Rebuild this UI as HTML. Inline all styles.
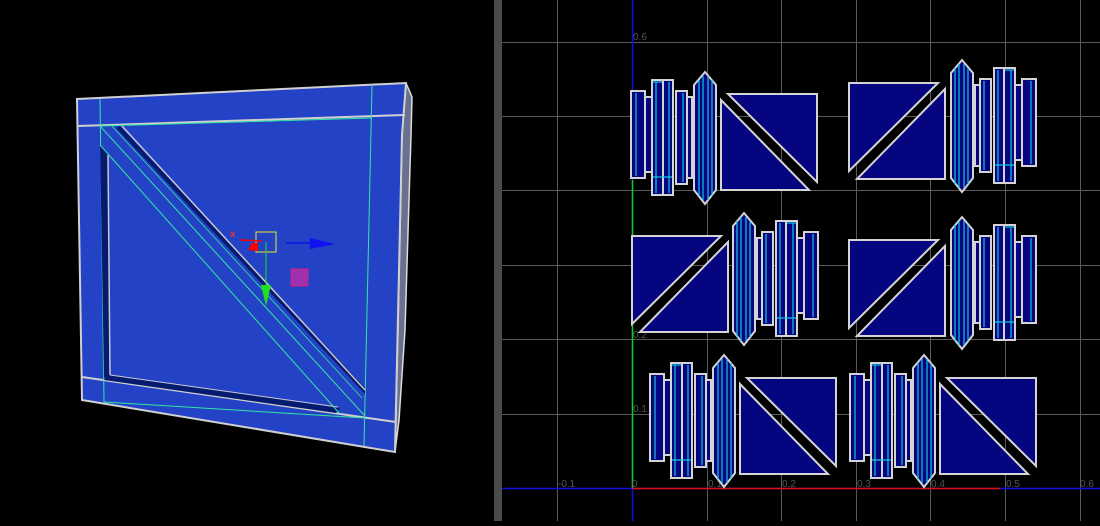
<!DOCTYPE html><html><head><style>html,body{margin:0;padding:0;background:#000;overflow:hidden}</style></head><body>
<svg width="1100" height="521" viewBox="0 0 1100 521" xmlns="http://www.w3.org/2000/svg" font-family="Liberation Sans, sans-serif">
<rect width="1100" height="521" fill="#000"/>
<defs>
<g id="strip" fill="#050580" stroke="#d4d4d4" stroke-width="2">
<rect x="0" y="19" width="14" height="87"/>
<rect x="14" y="25" width="7" height="75"/>
<rect x="21" y="8" width="11" height="115"/>
<rect x="32" y="8" width="10" height="115"/>
<rect x="45" y="19" width="11" height="93"/>
<rect x="56" y="25" width="5" height="81"/>
<polygon points="63,13 74,0 85,13 85,118 74,132 63,118"/>
<g stroke="#10c8e0" stroke-width="1.2">
<line x1="5" y1="21" x2="5" y2="104"/><line x1="25" y1="10" x2="25" y2="121"/><line x1="38" y1="10" x2="38" y2="121"/><line x1="52" y1="21" x2="52" y2="110"/>
<line x1="22" y1="10" x2="31" y2="10"/><line x1="22" y1="105" x2="41" y2="105"/>
<line x1="68" y1="8" x2="68" y2="124"/><line x1="72" y1="4" x2="72" y2="128"/><line x1="77" y1="4" x2="77" y2="128"/><line x1="81" y1="8" x2="81" y2="124"/>
</g>
</g>
<g id="sqA" fill="#050580" stroke="#d4d4d4" stroke-width="2">
<polygon points="0,6 0,96 88,96"/>
<polygon points="7,0 96,0 96,88"/>
</g>
</defs>
<!-- left viewport -->
<polygon points="406,83 412,97 411,135 405,330 399,420 395,452 398,330 402,135" fill="#6a7090" stroke="#ddd" stroke-width="1.5"/>
<polygon points="77,99 406,83 402,135 395,452 82,400" fill="#2442c6" stroke="#d0d0d0" stroke-width="2"/>
<polyline points="78,126 405,115" stroke="#d0d0d0" stroke-width="2" fill="none"/>
<polyline points="82,377 396,422" stroke="#d0d0d0" stroke-width="2" fill="none"/>
<line x1="100" y1="99" x2="104" y2="402" stroke="#30e8a0" stroke-width="1"/>
<line x1="372" y1="85" x2="364" y2="446" stroke="#30e8a0" stroke-width="1"/>
<line x1="100" y1="126" x2="372" y2="118" stroke="#30e8a0" stroke-width="1"/>
<polygon points="100,145 108,155 110,375 104,378" fill="#061a70"/>
<polygon points="108,375 340,408 336,413 104,380" fill="#061a70"/>
<line x1="108" y1="155" x2="110" y2="375" stroke="#c8c8d0" stroke-width="1.5"/>
<line x1="110" y1="375" x2="338" y2="407" stroke="#c8c8d0" stroke-width="1"/>
<polygon points="120,126 365,388 365,394 116,128" fill="#061a70"/>
<line x1="122" y1="126" x2="365" y2="390" stroke="#c8c8d0" stroke-width="1.5"/>
<line x1="100" y1="126" x2="365" y2="416" stroke="#30e8a0" stroke-width="1"/>
<line x1="100" y1="145" x2="340" y2="414" stroke="#30e8a0" stroke-width="1"/>
<line x1="112" y1="126" x2="362" y2="398" stroke="#30e8a0" stroke-width="0.8"/>
<line x1="104" y1="402" x2="365" y2="418" stroke="#30e8a0" stroke-width="1"/>
<!-- gizmo -->
<rect x="256" y="232" width="20" height="20" fill="none" stroke="#e8e820" stroke-width="1"/>
<line x1="240" y1="240" x2="262" y2="241" stroke="#f00" stroke-width="1.5"/>
<text x="230" y="237" fill="#f03030" font-size="10" font-weight="bold">x</text>
<path d="M248 250 L252 243 L258 243 L258 251 Z" fill="#f00"/>
<line x1="266" y1="242" x2="266" y2="290" stroke="#20e020" stroke-width="1"/>
<polygon points="261,285 271,285 266,306" fill="#20e020"/>
<line x1="286" y1="243" x2="314" y2="243" stroke="#1010f0" stroke-width="1.5"/>
<polygon points="310,238 335,244 310,249" fill="#1010f0"/>
<rect x="291" y="269" width="17" height="17" fill="#a030b0" stroke="#d02080" stroke-width="1"/>
<!-- divider -->
<rect x="494" y="0" width="8" height="521" fill="#4a4a4a"/>
<!-- grid -->
<g stroke="#5a5a5a" stroke-width="1">
<line x1="557.5" y1="0" x2="557.5" y2="521"/><line x1="707.5" y1="0" x2="707.5" y2="521"/><line x1="781.5" y1="0" x2="781.5" y2="521"/><line x1="856.5" y1="0" x2="856.5" y2="521"/><line x1="930.5" y1="0" x2="930.5" y2="521"/><line x1="1005.5" y1="0" x2="1005.5" y2="521"/><line x1="1080.5" y1="0" x2="1080.5" y2="521"/>
<line x1="502" y1="42.5" x2="1100" y2="42.5"/><line x1="502" y1="116.5" x2="1100" y2="116.5"/><line x1="502" y1="190.5" x2="1100" y2="190.5"/><line x1="502" y1="265.5" x2="1100" y2="265.5"/><line x1="502" y1="339.5" x2="1100" y2="339.5"/><line x1="502" y1="414.5" x2="1100" y2="414.5"/>
</g>
<line x1="632.5" y1="0" x2="632.5" y2="521" stroke="#1010e0" stroke-width="1.5"/>
<line x1="632.5" y1="180" x2="632.5" y2="488" stroke="#10d010" stroke-width="1.5"/>
<line x1="502" y1="488.5" x2="1100" y2="488.5" stroke="#1010e0" stroke-width="1.5"/>
<line x1="632" y1="488.5" x2="1000" y2="488.5" stroke="#e01010" stroke-width="1.5"/>
<g fill="#555" font-size="10">
<text x="633" y="40">0.6</text><text x="633" y="263">0.3</text><text x="633" y="338">0.2</text><text x="633" y="412">0.1</text>
<text x="558" y="487">-0.1</text><text x="632" y="487">0</text><text x="708" y="487">0.1</text><text x="782" y="487">0.2</text><text x="857" y="487">0.3</text><text x="931" y="487">0.4</text><text x="1006" y="487">0.5</text><text x="1080" y="487">0.6</text>
</g>
<!-- shapes -->
<use href="#strip" transform="translate(631,72)"/>
<use href="#sqA" transform="translate(721,94)"/>
<use href="#strip" transform="translate(1036,60) scale(-1,1)"/>
<use href="#sqA" transform="translate(945,83) scale(-1,1)"/>
<use href="#sqA" transform="translate(728,236) scale(-1,1)"/>
<use href="#strip" transform="translate(818,213) scale(-1,1)"/>
<use href="#sqA" transform="translate(945,240) scale(-1,1)"/>
<use href="#strip" transform="translate(1036,217) scale(-1,1)"/>
<use href="#strip" transform="translate(650,355)"/>
<use href="#sqA" transform="translate(740,378)"/>
<use href="#strip" transform="translate(850,355)"/>
<use href="#sqA" transform="translate(940,378)"/>
</svg>
</body></html>
